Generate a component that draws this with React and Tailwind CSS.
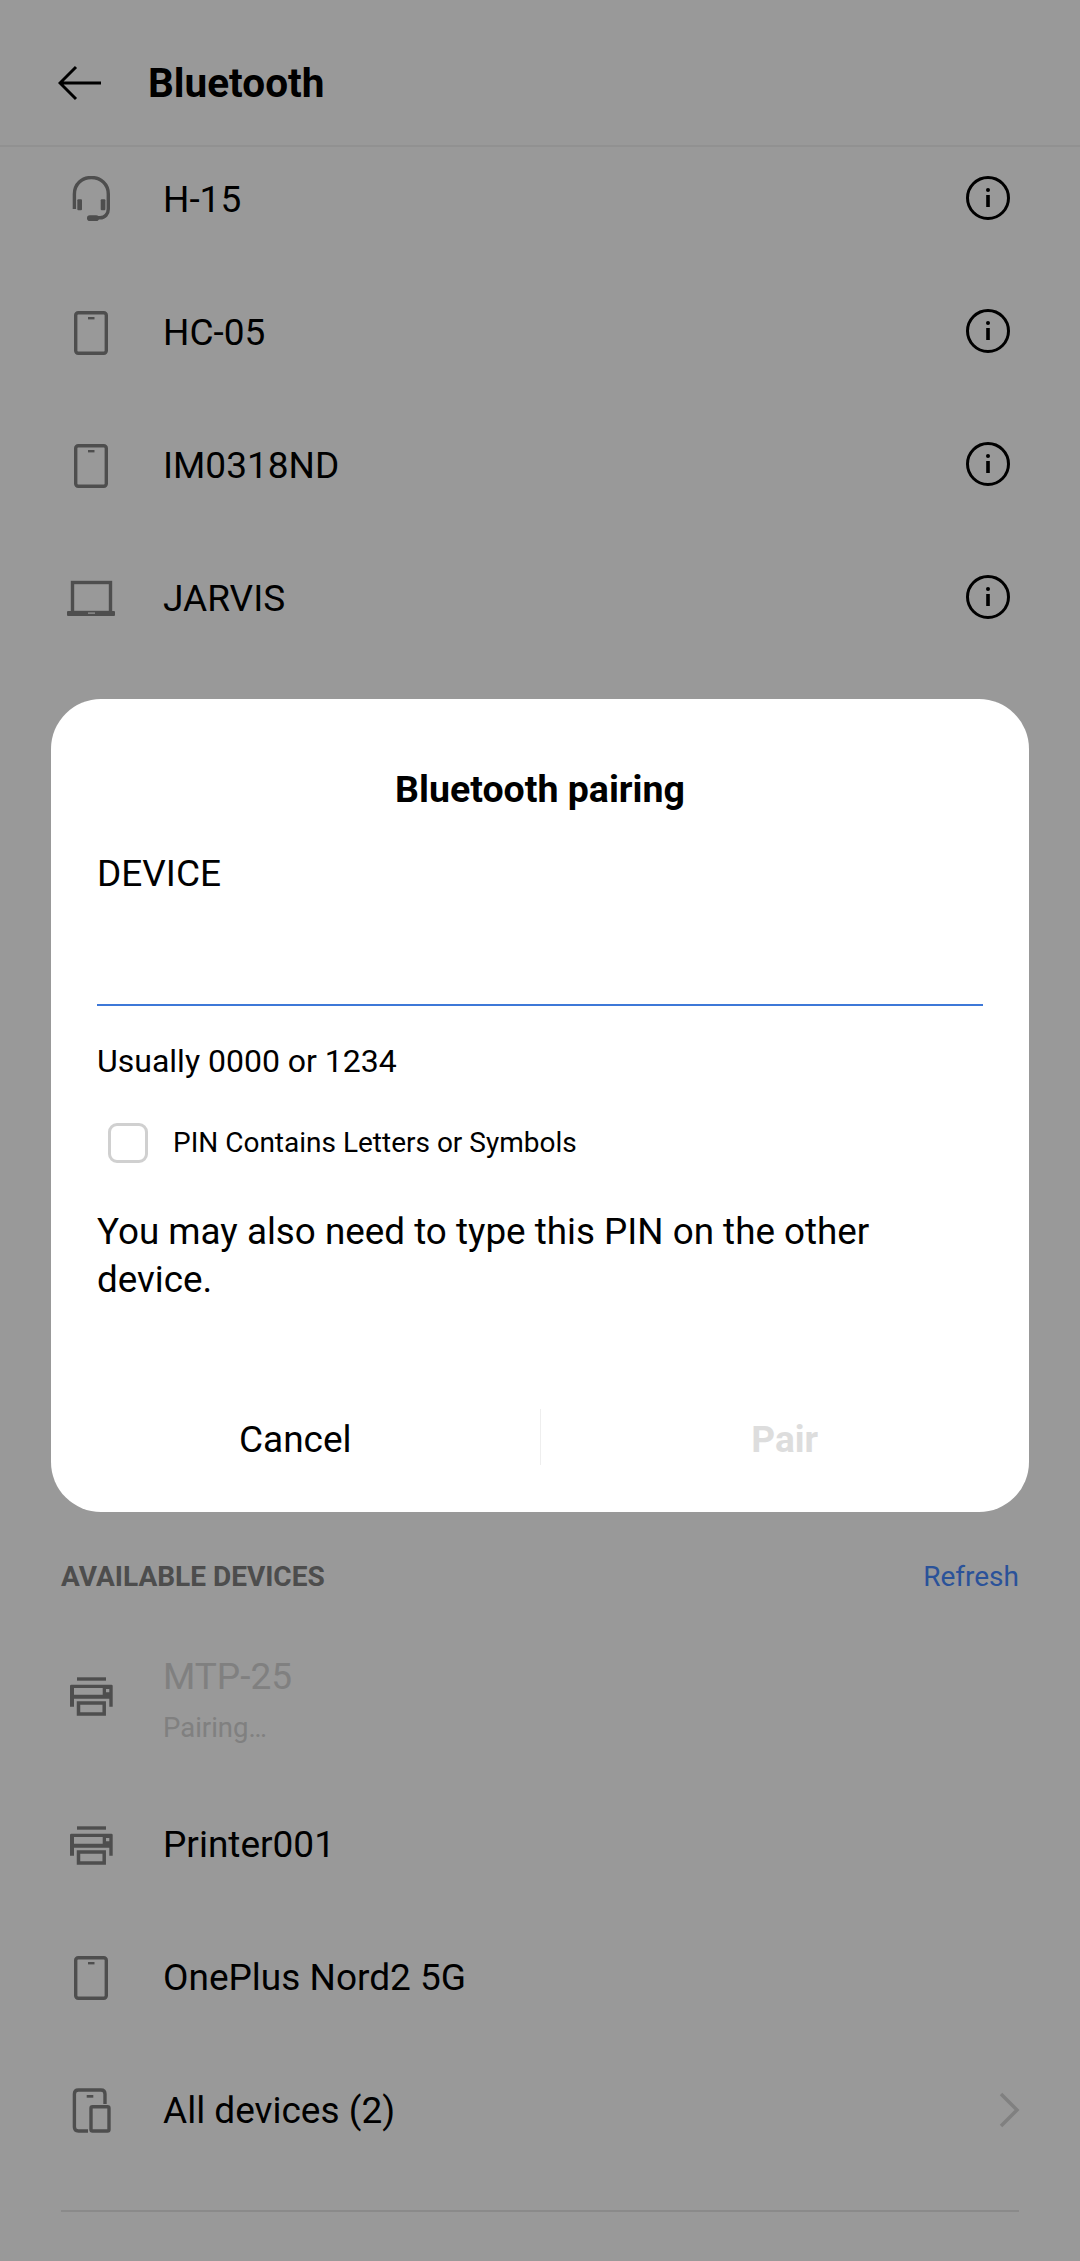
import React from 'react';

const ICON_COLOR = '#838383';

const PhoneIcon = () => (
  <svg width="48" height="48" viewBox="0 0 48 48" fill="none" stroke={ICON_COLOR} strokeWidth="3.4">
    <rect x="8.7" y="3.7" width="30.6" height="40.6" rx="2.5" />
    <rect x="21" y="8" width="6.5" height="2.4" fill={ICON_COLOR} stroke="none" />
  </svg>
);

const HeadsetIcon = () => (
  <svg width="48" height="48" viewBox="0 0 48 48" fill="none" stroke={ICON_COLOR} strokeWidth="3.4">
    <path d="M7.4 33 V18 C7.4 8 15 1.5 24.3 1.5 C33.6 1.5 41.3 8 41.3 18 V33 C41.3 38 38 41.8 33 41.8 H27" />
    <rect x="10.3" y="23.3" width="4.7" height="11" rx="1" fill={ICON_COLOR} stroke="none" />
    <rect x="33.7" y="23.3" width="4.7" height="11" rx="1" fill={ICON_COLOR} stroke="none" />
    <rect x="20" y="39.3" width="12" height="5.7" rx="2.8" fill={ICON_COLOR} stroke="none" />
  </svg>
);

const LaptopIcon = () => (
  <svg width="48" height="48" viewBox="0 0 48 48" fill="none" stroke={ICON_COLOR} strokeWidth="3.4">
    <rect x="5.5" y="7.5" width="38" height="30" />
    <rect x="0" y="36" width="48" height="5" rx="1" fill={ICON_COLOR} stroke="none" />
    <rect x="21" y="37.5" width="7" height="1.2" fill="#ffffff" stroke="none" />
  </svg>
);

const PrinterIcon = () => (
  <svg width="48" height="48" viewBox="0 0 48 48" fill="none">
    <rect x="10" y="5.3" width="29" height="3.4" fill={ICON_COLOR} />
    <path
      fillRule="evenodd"
      fill={ICON_COLOR}
      d="M3 14 Q3 12.7 4.3 12.7 H44.4 Q45.7 12.7 45.7 14 V34.7 H42.3 V26.7 H7 V34.7 H3 Z M7 16 H35.7 V22.7 H7 Z M39 17 H42.3 V20.3 H39 Z"
    />
    <rect x="11.5" y="31" width="25.7" height="11" stroke={ICON_COLOR} strokeWidth="3.5" />
  </svg>
);

const AllDevicesIcon = () => (
  <svg width="48" height="48" viewBox="0 0 48 48" fill="none" stroke={ICON_COLOR} strokeWidth="3.4">
    <path d="M38 17 V7 Q38 3 34 3 H11.4 Q7.4 3 7.4 7 V40 Q7.4 44 11.4 44 H21" />
    <rect x="24" y="19.7" width="18" height="24.3" rx="1.5" />
    <rect x="19.7" y="8" width="6.6" height="2.7" fill={ICON_COLOR} stroke="none" />
  </svg>
);

const InfoIcon = () => (
  <svg width="44" height="44" viewBox="0 0 44 44" fill="none">
    <circle cx="22" cy="22" r="20.5" stroke="#000000" strokeWidth="3" />
    <circle cx="22" cy="14" r="2" fill="#000000" />
    <rect x="20.2" y="19" width="3.6" height="12" fill="#000000" />
  </svg>
);

const DeviceRow = ({ icon, name, info, chevron }) => (
  <div className="flex items-center h-[133px] pl-[67px]">
    <div className="w-12 h-12 shrink-0">{icon}</div>
    <span className="ml-12 text-[37px] leading-[48px] text-black">{name}</span>
    {info && (
      <div className="ml-auto mr-[70px] mb-[4px]">
        <InfoIcon />
      </div>
    )}
    {chevron && (
      <svg className="ml-auto mr-[60px] mb-[2px]" width="21" height="36" viewBox="0 0 21 36" fill="none">
        <path d="M2 2 L18 18 L2 34" stroke="#d5d5d5" strokeWidth="3.5" />
      </svg>
    )}
  </div>
);

const App = () => {
  return (
    <div
      className="relative w-[1080px] h-[2261px] overflow-hidden bg-white"
      style={{ fontFamily: 'Roboto, "Noto Sans", sans-serif' }}
    >
      {/* 헤더 */}
      <header className="relative z-10 flex items-center h-[147px] pt-[20px] bg-white border-b-2 border-[#f2f2f2] pl-[58px]">
        <svg width="44" height="36" viewBox="0 0 44 36" fill="none">
          <path d="M43 18 H3 M18 2 L2 18 L18 34" stroke="#000000" strokeWidth="3" />
        </svg>
        <h1 className="ml-[46px] text-[40.5px] leading-[48px] font-bold text-black">Bluetooth</h1>
      </header>

      {/* 페어링된 기기 */}
      <div className="-mt-[14px]">
        <DeviceRow icon={<HeadsetIcon />} name="H-15" info />
        <DeviceRow icon={<PhoneIcon />} name="HC-05" info />
        <DeviceRow icon={<PhoneIcon />} name="IM0318ND" info />
        <DeviceRow icon={<LaptopIcon />} name="JARVIS" info />
      </div>

      <div className="h-[875px]" />

      {/* 사용 가능한 기기 */}
      <div className="flex items-center justify-between h-[74px] px-[61px]">
        <span className="text-[28px] font-bold text-[#808080]">AVAILABLE DEVICES</span>
        <span className="text-[28px] text-[#4689ff]">Refresh</span>
      </div>

      <div className="flex items-center h-[164px] pl-[67px]">
        <div className="w-12 h-12 shrink-0">
          <PrinterIcon />
        </div>
        <div className="ml-12 pt-[6px]">
          <p className="text-[37px] leading-[48px] text-[#d5d5d5]">MTP-25</p>
          <p className="mt-[10px] text-[27.5px] leading-[34px] text-[#d5d5d5]">Pairing…</p>
        </div>
      </div>
      <DeviceRow icon={<PrinterIcon />} name="Printer001" />
      <DeviceRow icon={<PhoneIcon />} name="OnePlus Nord2 5G" />
      <DeviceRow icon={<AllDevicesIcon />} name="All devices (2)" chevron />

      <div className="mx-[61px] mt-[33px] border-t-2 border-[#e6e6e6]" />

      {/* 딤 처리 */}
      <div className="absolute inset-0 z-20 bg-black/40" />

      {/* 페어링 다이얼로그 */}
      <div className="absolute z-30 left-[51px] top-[699px] w-[978px] h-[813px] bg-white rounded-[50px]">
        <div className="px-[46px] pt-[62px]">
          <h2 className="text-center text-[37.5px] leading-[56px] font-bold text-black">Bluetooth pairing</h2>
          <p className="mt-[33px] text-[37px] leading-[48px] text-black">DEVICE</p>
          <div className="h-[108px] border-b-2 border-[#3d78d8]" />
          <p className="mt-[35px] text-[32px] leading-[40px] text-black">Usually 0000 or 1234</p>
          <div className="mt-[42px] flex items-center h-10 pl-[11px]">
            <div className="w-10 h-10 border-[3px] border-[#d0d0d0] rounded-[9px]" />
            <span className="ml-[25px] text-[28px] text-black">PIN Contains Letters or Symbols</span>
          </div>
          <p className="mt-[45px] text-[36.8px] leading-[48px] text-black">
            You may also need to type this PIN on the other device.
          </p>
        </div>
        <div className="mt-[108px] flex items-center h-14">
          <button className="flex-1 text-[37px] leading-[56px] text-black">Cancel</button>
          <div className="w-px h-14 mb-[6px] bg-[#eeeeee]" />
          <button className="flex-1 text-[37px] leading-[56px] font-bold text-[#dddddd]">Pair</button>
        </div>
      </div>
    </div>
  );
};

export default App;
